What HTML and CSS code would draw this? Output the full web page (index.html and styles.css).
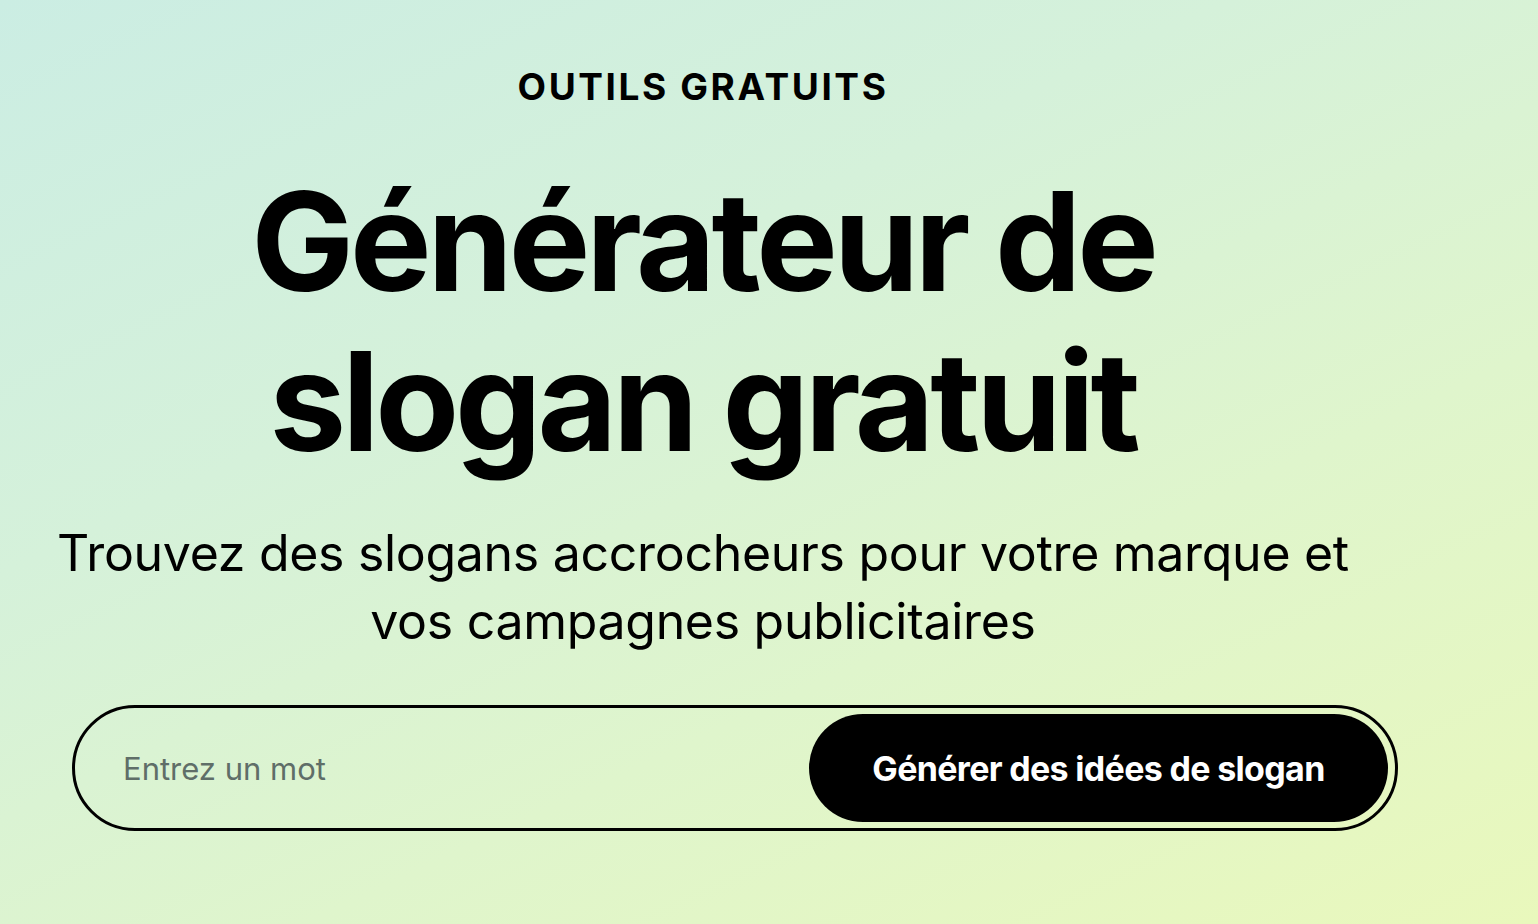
FILE: index.html
```html
<!DOCTYPE html>
<html lang="fr">
<head>
<meta charset="utf-8">
<title>Générateur de slogan gratuit</title>
<link rel="stylesheet" href="styles.css">
</head>
<body>
<main class="hero">
  <div class="hero-text">
    <p class="eyebrow">OUTILS GRATUITS</p>
    <h1 class="title">Générateur de<br>slogan gratuit</h1>
    <p class="lead">Trouvez des slogans accrocheurs pour votre marque et<br>vos campagnes publicitaires</p>
  </div>
  <form class="search">
    <input class="search-input" type="text" placeholder="Entrez un mot">
    <button class="search-btn" type="button">Générer des idées de slogan</button>
  </form>
</main>
</body>
</html>
```

FILE: styles.css
```css
html, body {
  margin: 0;
  padding: 0;
}
body {
  width: 1538px;
  height: 924px;
  overflow: hidden;
  font-family: Inter, "Noto Sans", sans-serif;
  color: #000;
  background: linear-gradient(155deg, #cbede3 0%, #d5f1da 35%, #dff5cc 65%, #e9f8bc 100%);
}
.hero {
  display: flex;
  flex-direction: column;
  padding-top: 65px;
}
.hero-text {
  width: 1326px;
  margin-left: 40px;
  text-align: center;
}
.eyebrow {
  margin: 0;
  font-size: 37px;
  font-weight: 700;
  letter-spacing: 0.07em;
  line-height: 44px;
}
.title {
  margin: 52px 0 0;
  font-size: 137px;
  font-weight: 700;
  letter-spacing: -0.03em;
  line-height: 160px;
}
.lead {
  margin: 38px 0 0;
  font-size: 50px;
  font-weight: 400;
  line-height: 68px;
  letter-spacing: -0.006em;
}
.search {
  margin: 50px 0 0 72px;
  width: 1326px;
  height: 126px;
  box-sizing: border-box;
  border: 3px solid #000;
  border-radius: 63px;
  padding: 6px 7px 6px 48px;
  display: flex;
  align-items: center;
  gap: 16px;
}
.search-input {
  flex: 1;
  min-width: 0;
  border: 0;
  background: transparent;
  outline: none;
  font-family: Inter, "Noto Sans", sans-serif;
  font-size: 31px;
  color: #000;
  padding: 0;
}
.search-input::placeholder {
  color: #5f6e68;
}
.search-btn {
  width: 579px;
  height: 108px;
  border: 0;
  border-radius: 54px;
  background: #000;
  color: #fff;
  font-family: Inter, "Noto Sans", sans-serif;
  font-size: 34px;
  font-weight: 700;
  letter-spacing: -0.02em;
  cursor: pointer;
}
```
